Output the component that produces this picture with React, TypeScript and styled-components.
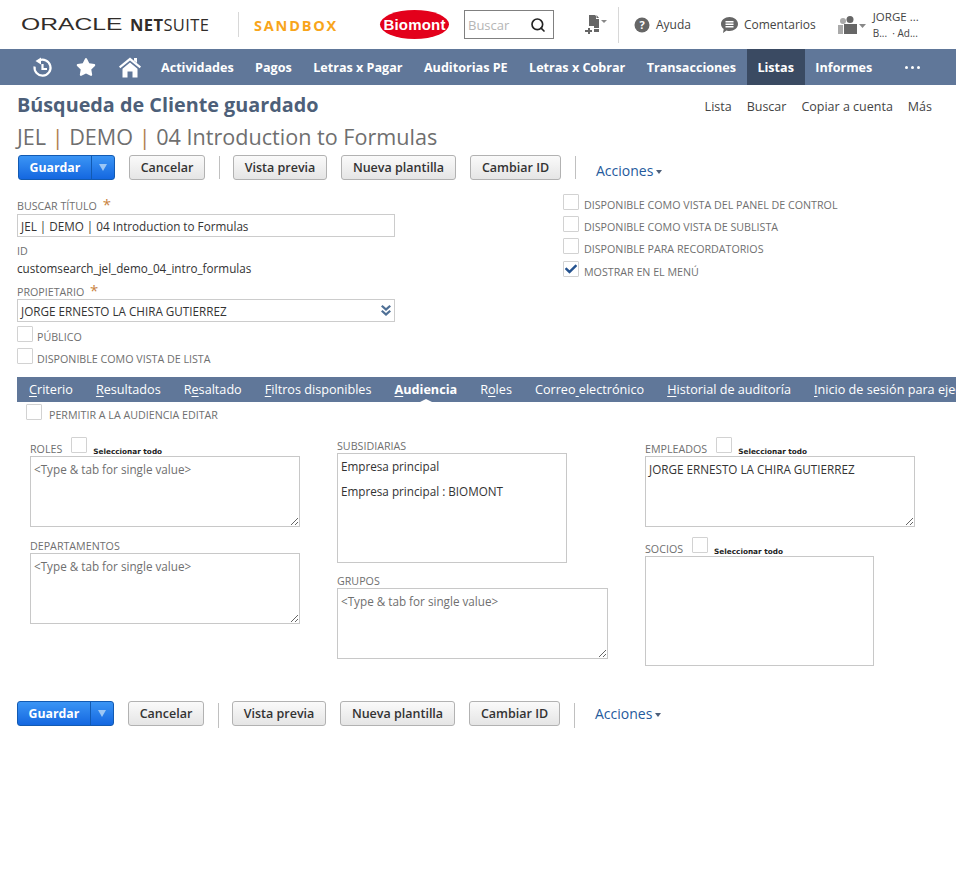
import styled, { createGlobalStyle } from "styled-components";
import { FaCheck, FaStar } from "react-icons/fa";
import { Search } from "lucide-react";

const GlobalStyle = createGlobalStyle`
  html, body { margin: 0; padding: 0; background: #fff; }
  body { font-family: "Open Sans", "Liberation Sans", sans-serif; color: #333; overflow-x: hidden; }
  * { box-sizing: border-box; }
`;

const Page = styled.div`
  width: 956px;
  height: 894px;
  overflow: hidden;
`;

/* top header */
const Header = styled.header`
  height: 49px;
  display: flex;
  align-items: center;
  padding-left: 21px;
`;

const OracleWord = styled.span`
  display: inline-block;
  width: 100px;
  font-family: "Liberation Sans", sans-serif;
  font-size: 16px;
  line-height: 20px;
  color: #312d2a;
  transform: scale(1.54, 1);
  transform-origin: left center;
  white-space: nowrap;
`;

const NetSuiteWord = styled.span`
  margin-left: 9px;
  width: 81px;
  font-size: 16.5px;
  line-height: 20px;
  color: #312d2a;
  letter-spacing: 0.4px;
  white-space: nowrap;
  b { font-weight: 700; }
`;

const HeaderRule = styled.div<{ $h: number; $ml: number }>`
  width: 1px;
  height: ${(p) => p.$h}px;
  margin-left: ${(p) => p.$ml}px;
  background: #d8d8d8;
`;

const SandboxWord = styled.span`
  margin-left: 15px;
  margin-top: 2px;
  width: 84px;
  font-size: 14.5px;
  font-weight: 700;
  letter-spacing: 1.8px;
  color: #f8a51b;
  white-space: nowrap;
`;

const BiomontLogo = styled.div`
  margin-left: 42px;
  width: 69px;
  height: 29px;
  border-radius: 50%;
  background: #e3001b;
  color: #fff;
  font-family: "Liberation Sans", sans-serif;
  font-size: 15px;
  font-weight: 700;
  letter-spacing: 0.2px;
  display: flex;
  align-items: center;
  justify-content: center;
`;

const SearchBox = styled.div`
  margin-left: 15px;
  width: 90px;
  height: 29px;
  border: 1px solid #808080;
  display: flex;
  align-items: center;
  justify-content: space-between;
  padding: 0 7px 0 3px;
  font-size: 13px;
  color: #b5b5b5;
`;

const HeaderIcon = styled.svg<{ $ml: number }>`
  margin-left: ${(p) => p.$ml}px;
  flex: none;
`;

const HeaderLink = styled.span<{ $ml: number }>`
  margin-left: ${(p) => p.$ml}px;
  font-size: 12px;
  color: #444;
  white-space: nowrap;
`;

const UserBlock = styled.div`
  margin-left: 7px;
  display: flex;
  flex-direction: column;
  font-size: 11px;
  line-height: 16px;
  color: #444;
  white-space: nowrap;
  span:first-child { font-size: 11.5px; }
  span:last-child { font-size: 10px; }
`;

/* main nav */
const Nav = styled.nav`
  height: 36px;
  background: #607799;
  display: flex;
  align-items: stretch;
  color: #fff;
`;

const NavIcon = styled.div<{ $w: number }>`
  width: ${(p) => p.$w}px;
  flex: none;
  display: flex;
  align-items: center;
  justify-content: center;
`;

const NavItem = styled.div<{ $active?: boolean }>`
  padding: 0 10.7px;
  display: flex;
  align-items: center;
  font-size: 12.6px;
  font-weight: 700;
  white-space: nowrap;
  background: ${(p) => (p.$active ? "#3a4a62" : "transparent")};
`;

const NavDots = styled.div`
  margin-left: 22px;
  display: flex;
  align-items: center;
  gap: 3px;
  i { width: 3px; height: 3px; border-radius: 50%; background: #fff; }
`;

/* titles */
const TitleRow = styled.div`
  height: 40px;
  display: flex;
  align-items: center;
  justify-content: space-between;
  padding: 0 24px 2px 17px;
`;

const PageTitle = styled.h1`
  margin: 0;
  font-size: 19.8px;
  font-weight: 700;
  color: #4d5f79;
`;

const TopLinks = styled.div`
  display: flex;
  gap: 15px;
  font-size: 12.5px;
  color: #444;
  margin-top: 4px;
`;

const RecordTitle = styled.h2`
  margin: 0;
  padding-left: 17px;
  height: 24px;
  font-size: 21.6px;
  line-height: 24px;
  font-weight: 400;
  color: #6f6f6f;
  white-space: nowrap;
  i { font-style: normal; color: #b08050; }
`;

/* toolbar */
const Toolbar = styled.div<{ $mt: number; $ml: number }>`
  margin-top: ${(p) => p.$mt}px;
  margin-left: ${(p) => p.$ml}px;
  height: 25px;
  display: flex;
  align-items: stretch;
`;

const SaveButton = styled.div`
  width: 97px;
  display: flex;
  border: 1px solid #125ab2;
  border-radius: 3px;
  background: linear-gradient(#3b95f5, #1467e0);
  color: #fff;
  font-size: 12.3px;
  font-weight: 700;
`;

const SaveLabel = styled.span`
  width: 73px;
  padding-bottom: 1px;
  display: flex;
  align-items: center;
  justify-content: center;
  border-right: 1px solid #125ab2;
`;

const SaveArrow = styled.span`
  flex: 1;
  display: flex;
  align-items: center;
  justify-content: center;
  &::after {
    content: "";
    border-left: 4px solid transparent;
    border-right: 4px solid transparent;
    border-top: 7px solid #9cc7f5;
  }
`;

const Button = styled.div<{ $w: number; $ml: number }>`
  width: ${(p) => p.$w}px;
  margin-left: ${(p) => p.$ml}px;
  padding-bottom: 1px;
  display: flex;
  align-items: center;
  justify-content: center;
  border: 1px solid #b2b2b2;
  border-radius: 3px;
  background: linear-gradient(#fafafa, #e5e5e5);
  font-size: 12.5px;
  font-weight: 600;
  color: #333;
  white-space: nowrap;
`;

const ToolbarRule = styled.div<{ $bottom?: boolean }>`
  width: 1px;
  margin-left: 14px;
  margin-top: ${(p) => (p.$bottom ? 2 : 1)}px;
  margin-bottom: ${(p) => (p.$bottom ? -2 : 1)}px;
  background: #c0c0c0;
`;

const ActionsLink = styled.div<{ $drop: number }>`
  margin-left: 20px;
  display: flex;
  align-items: center;
  gap: 3px;
  padding-top: ${(p) => p.$drop}px;
  font-size: 14px;
  color: #255a9c;
  &::after {
    content: "";
    margin-top: 2px;
    border-left: 3.5px solid transparent;
    border-right: 3.5px solid transparent;
    border-top: 4px solid #4d5f79;
  }
`;

/* main form */
const FormGrid = styled.div`
  margin-top: 14px;
  display: grid;
  grid-template-columns: 378px 1fr;
  column-gap: 168px;
  padding-left: 17px;
  height: 183px;
`;

const Column = styled.div`
  display: flex;
  flex-direction: column;
  align-items: flex-start;
`;

const FieldLabel = styled.label<{ $mt?: number }>`
  margin-top: ${(p) => p.$mt ?? 0}px;
  display: block;
  height: 15px;
  font-size: 10.7px;
  line-height: 15px;
  color: #6f6f6f;
  white-space: nowrap;
  text-transform: uppercase;
  em { margin-left: 3px; font-style: normal; font-size: 15px; color: #c9833f; }
`;

const TextBox = styled.div<{ $mt: number }>`
  width: 378px;
  height: 23px;
  margin-top: ${(p) => p.$mt}px;
  border: 1px solid #cccccc;
  padding: 0 3px;
  display: flex;
  align-items: center;
  justify-content: space-between;
  font-size: 11.7px;
  color: #333;
  white-space: nowrap;
`;

const PlainValue = styled.div`
  margin-top: 1px;
  font-size: 11.7px;
  line-height: 16px;
  color: #333;
`;

const CheckRow = styled.div<{ $mt: number; $ml?: number; $gap?: number }>`
  margin-top: ${(p) => p.$mt}px;
  margin-left: ${(p) => p.$ml ?? 0}px;
  display: flex;
  align-items: flex-start;
  gap: ${(p) => p.$gap ?? 5}px;
  font-size: 10.7px;
  color: #6f6f6f;
  white-space: nowrap;
  span { margin-top: 4px; line-height: 15px; }
`;

const CheckBox = styled.div`
  width: 16px;
  height: 16px;
  flex: none;
  border: 1px solid #d2d2d2;
  border-radius: 1px;
  display: flex;
  align-items: center;
  justify-content: center;
  color: #24528f;
`;

/* subtabs */
const TabBar = styled.div`
  margin-left: 17px;
  height: 25px;
  background: #607799;
  display: flex;
  align-items: center;
  padding-left: 12px;
  gap: 23px;
  color: #fff;
  font-size: 12.65px;
  white-space: nowrap;
  overflow: hidden;
  u { text-decoration-thickness: 1px; text-underline-offset: 2px; }
`;

const Tab = styled.div<{ $active?: boolean }>`
  position: relative;
  height: 25px;
  line-height: 25px;
  font-weight: ${(p) => (p.$active ? 700 : 400)};
  &::after {
    content: "";
    display: ${(p) => (p.$active ? "block" : "none")};
    position: absolute;
    left: 50%;
    bottom: 0;
    margin-left: -6px;
    border-left: 6px solid transparent;
    border-right: 6px solid transparent;
    border-bottom: 3px solid #fff;
  }
`;

/* audience panel */
const AudienceGrid = styled.div`
  margin-top: 16px;
  padding-left: 30px;
  display: grid;
  grid-template-columns: 307px 308px 1fr;
`;

const LabelRow = styled.div<{ $mt?: number }>`
  margin-top: ${(p) => p.$mt ?? 0}px;
  margin-bottom: -1px;
  height: 18px;
  display: flex;
  align-items: flex-end;
  font-size: 10.7px;
  line-height: 15px;
  color: #6f6f6f;
  white-space: nowrap;
`;

const SelectAll = styled.b`
  margin-left: 6px;
  font-family: "DejaVu Sans", sans-serif;
  font-size: 7.3px;
  line-height: 11px;
  color: #222;
`;

const LabelCheck = styled(CheckBox)`
  margin-left: 9px;
  margin-bottom: 4px;
`;

const Note = styled.textarea<{ $w?: number; $h?: number }>`
  display: block;
  width: ${(p) => p.$w ?? 270}px;
  height: ${(p) => p.$h ?? 71}px;
  margin: 0;
  border: 1px solid #c8c8c8;
  border-radius: 0;
  padding: 4px 3px;
  resize: both;
  outline: none;
  font-family: "Open Sans", sans-serif;
  font-size: 11.7px;
  line-height: 16px;
  color: #333;
  &::placeholder { color: #6f6f6f; opacity: 1; }
`;

const ListBox = styled.div<{ $w: number }>`
  width: ${(p) => p.$w}px;
  height: 110px;
  border: 1px solid #c8c8c8;
  padding: 4px 3px;
  font-size: 11.7px;
  line-height: 17px;
  color: #333;
  p { margin: 0 0 8px; }
`;

const navItems = ["Actividades", "Pagos", "Letras x Pagar", "Auditorias PE", "Letras x Cobrar", "Transacciones", "Listas", "Informes"];

function Actions({ mt, ml, bottom }: { mt: number; ml: number; bottom?: boolean }) {
  return (
    <Toolbar $mt={mt} $ml={ml}>
      <SaveButton>
        <SaveLabel>Guardar</SaveLabel>
        <SaveArrow />
      </SaveButton>
      <Button $w={76} $ml={14}>Cancelar</Button>
      <ToolbarRule $bottom={bottom} />
      <Button $w={94} $ml={13}>Vista previa</Button>
      <Button $w={115} $ml={14}>Nueva plantilla</Button>
      <Button $w={91} $ml={14}>Cambiar ID</Button>
      <ToolbarRule $bottom={bottom} />
      <ActionsLink $drop={bottom ? 0 : 6}>Acciones</ActionsLink>
    </Toolbar>
  );
}

function App() {
  return (
    <Page>
      <GlobalStyle />
      <Header>
        <OracleWord>ORACLE</OracleWord>
        <NetSuiteWord><b>NET</b>SUITE</NetSuiteWord>
        <HeaderRule $h={25} $ml={27} />
        <SandboxWord>SANDBOX</SandboxWord>
        <BiomontLogo>Biomont</BiomontLogo>
        <SearchBox>
          Buscar
          <Search size={16} color="#222" strokeWidth={2.5} />
        </SearchBox>

        <HeaderIcon $ml={31} width="22" height="20" viewBox="0 0 22 20" fill="#666">
          <path d="M4 0h6l1 1v3h3v9H9v-2H4z" />
          <path d="M11.500 0l2.500 3h-2.500z" />
          <path d="M3 13h2v2h2v2H5v2H3v-2H0v-2h3z" />
          <path d="M9 14h5v3H9z" />
          <path d="M16 5h6l-3 3z" fill="#888" />
        </HeaderIcon>
        <HeaderRule $h={36} $ml={11} />
        <HeaderIcon $ml={15} width="16" height="16" viewBox="0 0 16 16">
          <circle cx="8" cy="8" r="7.500" fill="#666" />
          <text x="8" y="12" textAnchor="middle" fontSize="11" fontWeight="700" fontFamily="Open Sans" fill="#fff">?</text>
        </HeaderIcon>
        <HeaderLink $ml={6}>Ayuda</HeaderLink>
        <HeaderIcon $ml={30} width="17" height="16" viewBox="0 0 17 16">
          <path d="M8.500 0C13 0 17 3 17 7s-4 7-8.500 7c-1 0-2-.1-3-.5L2 16l.7-4C1 10.800 0 9 0 7c0-4 4-7 8.500-7z" fill="#666" />
          <path d="M4.500 4h8v1.500h-8zM4.500 6.500h8V8h-8zM4.500 9h8v1.500h-8z" fill="#fff" />
        </HeaderIcon>
        <HeaderLink $ml={6}>Comentarios</HeaderLink>
        <HeaderIcon $ml={22} width="28" height="18" viewBox="0 0 28 18" fill="#666">
          <circle cx="5" cy="5" r="3" fill="#aaa" />
          <path d="M0 9h5v9H0z" fill="#aaa" />
          <circle cx="12" cy="3.500" r="3.500" />
          <path d="M6 8h13v10H6z" />
          <path d="M21 8h7l-3.500 4z" fill="#888" />
        </HeaderIcon>
        <UserBlock>
          <span>JORGE ...</span>
          <span>B... &nbsp;· Ad...</span>
        </UserBlock>
      </Header>

      <Nav>
        <NavIcon $w={28} />
        <NavIcon $w={28}>
          <svg width="21" height="21" viewBox="0 0 21 21" fill="none" stroke="#fff" strokeWidth="2.200">
            <path d="M7 3.500A8 8 0 1 1 2.600 9.500" />
            <path d="M9 0.500v7L3.500 4z" fill="#fff" stroke="none" />
            <path d="M10.500 7v5h4.500" />
          </svg>
        </NavIcon>
        <NavIcon $w={60}><FaStar size={20} /></NavIcon>
        <NavIcon $w={28}>
          <svg width="22" height="21" viewBox="0 0 22 21" fill="#fff">
            <path d="M15 1h3v5l-3-2.500z" />
            <path d="M11 0.500L22 9.500l-1.300 1.700L11 3.400 1.300 11.200 0 9.500z" />
            <path d="M11 5.500l7.500 6.200V20.500h-5v-6h-5v6h-5v-8.800z" />
          </svg>
        </NavIcon>
        <NavIcon $w={6.300} />
        {navItems.map((item) => (
          <NavItem key={item} $active={item === "Listas"}>{item}</NavItem>
        ))}
        <NavDots><i /><i /><i /></NavDots>
      </Nav>

      <TitleRow>
        <PageTitle>Búsqueda de Cliente guardado</PageTitle>
        <TopLinks>
          <span>Lista</span>
          <span>Buscar</span>
          <span>Copiar a cuenta</span>
          <span>Más</span>
        </TopLinks>
      </TitleRow>
      <RecordTitle>JEL <i>|</i> DEMO <i>|</i> 04 Introduction to Formulas</RecordTitle>

      <Actions mt={6} ml={18} />

      <FormGrid>
        <Column>
          <FieldLabel $mt={3}>Buscar título <em>*</em></FieldLabel>
          <TextBox $mt={2}>JEL | DEMO | 04 Introduction to Formulas</TextBox>
          <FieldLabel $mt={7}>ID</FieldLabel>
          <PlainValue>customsearch_jel_demo_04_intro_formulas</PlainValue>
          <FieldLabel $mt={7}>Propietario <em>*</em></FieldLabel>
          <TextBox $mt={1}>
            JORGE ERNESTO LA CHIRA GUTIERREZ
            <svg width="10" height="11" viewBox="0 0 10 11" fill="#4f7096">
              <path d="M0 1.500L1.500 0 5 3 8.500 0 10 1.500 5 6z" />
              <path d="M0 6.500L1.500 5 5 8 8.500 5 10 6.500 5 11z" />
            </svg>
          </TextBox>
          <CheckRow $mt={4} $gap={4}><CheckBox /><span>PÚBLICO</span></CheckRow>
          <CheckRow $mt={3} $gap={4}><CheckBox /><span>DISPONIBLE COMO VISTA DE LISTA</span></CheckRow>
        </Column>
        <Column>
          <CheckRow $mt={0}><CheckBox /><span>DISPONIBLE COMO VISTA DEL PANEL DE CONTROL</span></CheckRow>
          <CheckRow $mt={3}><CheckBox /><span>DISPONIBLE COMO VISTA DE SUBLISTA</span></CheckRow>
          <CheckRow $mt={3}><CheckBox /><span>DISPONIBLE PARA RECORDATORIOS</span></CheckRow>
          <CheckRow $mt={4}><CheckBox><FaCheck size={12} /></CheckBox><span>MOSTRAR EN EL MENÚ</span></CheckRow>
        </Column>
      </FormGrid>

      <TabBar>
        <Tab><u>C</u>riterio</Tab>
        <Tab><u>R</u>esultados</Tab>
        <Tab>R<u>e</u>saltado</Tab>
        <Tab><u>F</u>iltros disponibles</Tab>
        <Tab $active><u>A</u>udiencia</Tab>
        <Tab>R<u>o</u>les</Tab>
        <Tab>Correo<u> </u>electrónico</Tab>
        <Tab><u>H</u>istorial de auditoría</Tab>
        <Tab><u>I</u>nicio de sesión para ejecutivos</Tab>
      </TabBar>

      <CheckRow $mt={2} $ml={26} $gap={7}><CheckBox /><span>PERMITIR A LA AUDIENCIA EDITAR</span></CheckRow>

      <AudienceGrid>
        <Column>
          <LabelRow>ROLES<LabelCheck /><SelectAll>Seleccionar todo</SelectAll></LabelRow>
          <Note placeholder="<Type & tab for single value>" />
          <LabelRow $mt={9}>DEPARTAMENTOS</LabelRow>
          <Note placeholder="<Type & tab for single value>" />
        </Column>
        <Column>
          <LabelRow $mt={-3}>SUBSIDIARIAS</LabelRow>
          <ListBox $w={230}>
            <p>Empresa principal</p>
            <p>Empresa principal : BIOMONT</p>
          </ListBox>
          <LabelRow $mt={8}>GRUPOS</LabelRow>
          <Note $w={271} placeholder="<Type & tab for single value>" />
        </Column>
        <Column>
          <LabelRow>EMPLEADOS<LabelCheck /><SelectAll>Seleccionar todo</SelectAll></LabelRow>
          <Note defaultValue="JORGE ERNESTO LA CHIRA GUTIERREZ" />
          <LabelRow $mt={12}>SOCIOS<LabelCheck /><SelectAll>Seleccionar todo</SelectAll></LabelRow>
          <ListBox $w={229} />
        </Column>
      </AudienceGrid>

      <Actions mt={35} ml={17} bottom />
    </Page>
  );
}

export default App;
